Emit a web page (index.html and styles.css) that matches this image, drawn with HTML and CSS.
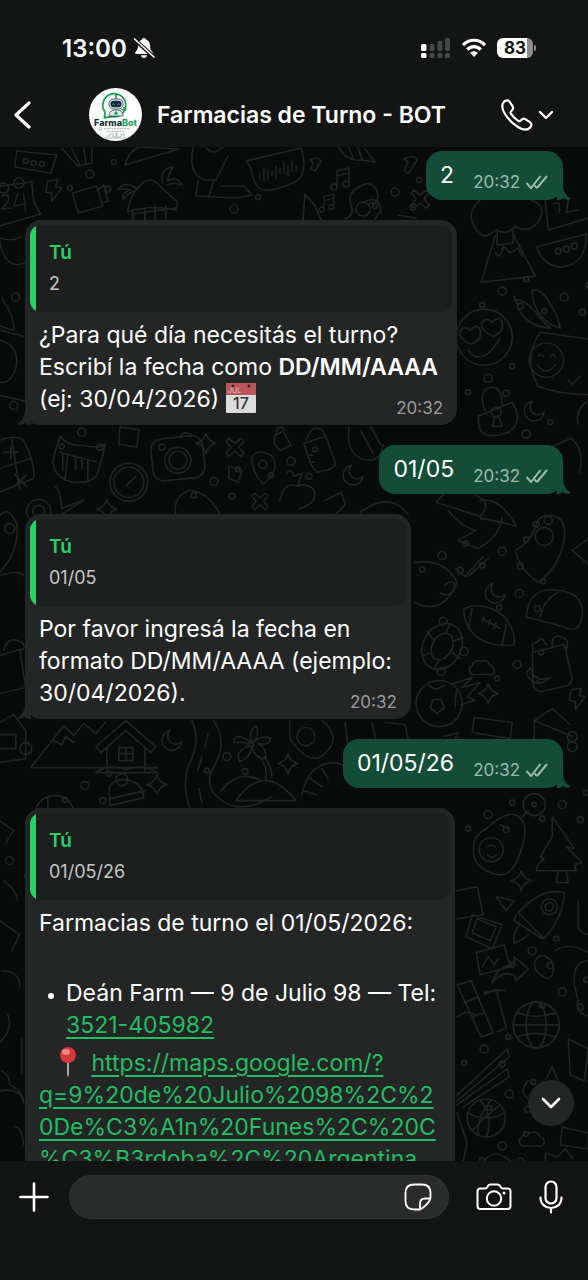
FILE: index.html
```html
<!DOCTYPE html>
<html lang="es">
<head>
  <meta charset="UTF-8">
  <meta name="viewport" content="width=device-width, initial-scale=1.0">
  <title>Farmacias de Turno - BOT</title>
  <link rel="stylesheet" href="styles.css">
</head>
<body>
  <div class="app">
    <header class="top">
      <div class="status">
        <div class="status-left">
          <span class="clock">13:00</span>
          <svg width="22" height="22" viewBox="0 0 22 22">
            <path d="M11 1c-1.300 0-2 .8-2.200 1.800C6 3.700 5 6 5 8.500c0 3.500-1 5-2.500 6.500-.8 1-.4 2 .7 2h15.600c1.100 0 1.500-1 .7-2C18 13.500 17 12 17 8.500c0-2.500-1-4.800-3.800-5.700C13 1.800 12.300 1 11 1zM8 18.300h6c-.3 1.700-1.400 2.700-3 2.700s-2.700-1-3-2.700z" fill="#fff"/>
            <path d="M2 3l19 17" stroke="#131414" stroke-width="4"/>
            <path d="M1.500 2l19.500 18" stroke="#fff" stroke-width="1.700" stroke-linecap="round"/>
          </svg>
        </div>
        <div class="status-right">
          <svg width="30" height="22" viewBox="0 0 30 22">
            <g fill="#454646">
              <rect x="8.500" y="7" width="5" height="7" rx="1.500"/><rect x="16.500" y="4" width="5" height="10" rx="1.500"/><rect x="24" y="1" width="5" height="13" rx="1.500"/>
              <rect x="8.500" y="16" width="5" height="5" rx="1.500"/><rect x="16.500" y="16" width="5" height="5" rx="1.500"/><rect x="24" y="16" width="5" height="5" rx="1.500"/>
            </g>
            <g fill="#fff"><rect x="0" y="7" width="5.500" height="7" rx="1.500"/><rect x="0" y="16" width="5.500" height="5" rx="1.500"/></g>
          </svg>
          <svg width="26" height="20" viewBox="0 0 26 20" fill="none" stroke="#fff" stroke-width="3.200">
            <path d="M2 7.200c6-6.600 16-6.600 22 0"/>
            <path d="M6.200 11.600c3.900-4.100 9.700-4.100 13.600 0"/>
            <path d="M13 19l-4-4.200c2.300-2.200 5.700-2.200 8 0z" fill="#fff" stroke="none"/>
          </svg>
          <span class="battery"><b>83</b></span>
        </div>
      </div>
      <div class="titlebar">
        <button class="icon-btn back" aria-label="Atrás">
          <svg width="18" height="30" viewBox="0 0 18 30" fill="none" stroke="#fff" stroke-width="3.200" stroke-linecap="round" stroke-linejoin="round"><path d="M16 3L3 15l13 12"/></svg>
        </button>
        <svg class="avatar" width="53" height="53" viewBox="0 0 53 53">
          <circle cx="26.500" cy="26.500" r="26.500" fill="#fff"/>
          <path d="M16 24a11.500 11.500 0 1 1 7 4.500l-7.500 1.500z" fill="#fff" stroke="#23a055" stroke-width="1.800"/>
          <path d="M27 7v4" stroke="#20394a" stroke-width="1"/><circle cx="27" cy="7.500" r="1.200" fill="#23a055"/>
          <rect x="20" y="11" width="14" height="10" rx="4.500" fill="#e2e9ec" stroke="#20394a" stroke-width=".8"/>
          <rect x="21.500" y="12.800" width="11" height="6.500" rx="3" fill="#122c3d"/>
          <path d="M23.500 16.500q1-1.500 2 0M28.500 16.500q1-1.500 2 0" stroke="#4cc3e8" stroke-width=".9" fill="none"/>
          <path d="M20 28c0-4 2-6 7-6s7 2 7 6z" fill="#dfe8e8" stroke="#20394a" stroke-width=".7"/>
          <path d="M27 23.500v3.500M25.200 25.200h3.600M35 19v5M32.500 21.500h5" stroke="#23a055" stroke-width="1.500"/>
          <text class="logo" x="26.500" y="38"><tspan fill="#14303f">Farma</tspan><tspan fill="#23a055">Bot</tspan></text>
          <circle cx="11.500" cy="41" r="1.500" fill="none" stroke="#6b9b80" stroke-width=".6"/>
          <path d="M15 40.700h26M18 43.300h17" stroke="#a6b8b2" stroke-width="1" stroke-dasharray="2 .5"/>
          <path d="M15 50h23M17 48h4v-2h3v3h3v-4h1v4h4v-3h3v3" stroke="#7fae96" stroke-width=".7" fill="none"/>
        </svg>
        <h1>Farmacias de Turno - BOT</h1>
        <button class="icon-btn call" aria-label="Llamar">
          <svg width="32" height="32" viewBox="0 0 32 32" fill="none" stroke="#fff" stroke-width="2.200" stroke-linejoin="round"><path d="M3 2.800C5 .8 7.400 1 8.800 3l2.700 4.200c1 1.600.8 2.700-.3 3.900l-1.300 1.500c-.6.700-.5 1.400 0 2.100 2 3.100 4.200 5.200 7.300 7.200.7.500 1.500.5 2.100-.1l1.500-1.300c1.200-1 2.400-1.200 3.900-.2l4.200 2.800c2 1.400 2 3.700.2 5.500C26.500 31.500 22 31.200 17 28 11 24.300 7.500 20.700 4 15 .9 10 .3 5.600 3 2.800z"/></svg>
          <svg width="16" height="10" viewBox="0 0 16 10" fill="none" stroke="#fff" stroke-width="2.400" stroke-linecap="round" stroke-linejoin="round"><path d="M2 2l6 6 6-6"/></svg>
        </button>
      </div>
    </header>

    <main class="chat">
      <svg class="wallpaper" viewBox="0 147 588 1013" preserveAspectRatio="xMidYMin slice">
        <defs>
          <g id="star"><path d="M0-10Q2-2 10 0 2 2 0 10-2 2-10 0-2-2 0-10z"/></g>
          <g id="moon"><path d="M-2-10a10 10 0 1 0 12 11A8 8 0 0 1-2-10z"/></g>
          <g id="cross"><path d="M-9-6l3-3 6 5 6-5 3 3-5 6 5 6-3 3-6-5-6 5-3-3 5-6z"/></g>
          <g id="cloud"><path d="M-10 7a5 5 0 0 1 0-9Q-8-9-1-6 5-9 8-2q6 2 3 8-1 2-5 1z"/></g>
          <g id="bolt"><path d="M-6-9L4-10 2-3l6 1L-2 11l0-8-6-1z"/></g>
          <g id="ball"><circle r="19"/><path d="M-18-5Q0 5 18-5M-14 13Q0-3 14-13M-6-18Q8 0 0 19M5-18Q-10 0-8 17"/></g>
          <g id="globe"><circle r="23"/><ellipse rx="10" ry="23"/><path d="M-23 0h46M-19-12q19 7 38 0M-19 12q19-7 38 0"/></g>
          <g id="house"><path d="M-30 2L0-24 30 2l-5 6L0-14-25 8zM-19 4v22M19 4v22M-7 3H7v13H-7zM0 3v13M-7 9H7M-30 28q14-10 30-3 16-7 32 3z"/></g>
          <g id="jam"><path d="M-18-10l32-8 8 34q-1 6-8 8l-23 5q-6 0-8-6zM-17-10l-1-8 10-6 4 6M2-14q-2-14 8-12t6 13M-20 5q4 16 20 10-15 13-24-4z"/></g>
          <g id="note"><path d="M-5 8v-16l12-3v16M-5-3L7-6"/><circle cx="-8" cy="8" r="3"/><circle cx="4" cy="5" r="3"/></g>
          <g id="dots">
            <circle r="4"/><circle cx="24" cy="-12" r="2.500"/><circle cx="18" cy="15" r="3"/><circle cx="-20" cy="14" r="2.500"/>
          </g>
          <g id="smile"><circle r="19"/><path d="M-9-4q3-5 6 0M4-4q3-5 6 0M-10 5q10 14 20 0"/></g>
        </defs>
        <g class="doodles">
          <path d="M17 151l40 4-6 18-36-6zM57 155l-6 18"/>
          <circle cx="26" cy="161" r="2.500"/><circle cx="34" cy="163" r="2.500"/><circle cx="42" cy="164" r="2.500"/>
          <path d="M62 148l16 18 14-3v-15M72 148l8 17M84 148l2 15M125 165q4-14 14-18l40 2z"/>
          <path d="M0 186l32-4 2 20 7 12-41 12M2 196q9-4 6 6l-6 7 10-1M18 194l-4 12 12-2M24 194l2 18"/><circle cx="4" cy="188" r="5"/><circle cx="19" cy="183" r="5"/>
          <use href="#bolt" transform="translate(54 190)"/>
          <path d="M73 193l24-7 6 20-24 7q-5-12-6-20zM98 190l6-5 4 16-6 2"/>
          <path d="M128 210q4-18 10-22 12-16 24 0l16 14-2 8q-25-6-48 2zM133 212v9M145 208v12M155 206v14M166 206v14M132 214l44-6M163 183q-4-14 10-16-5 8-5 14 8-6 14 4-10-3-15 0M136 188q-12-8-18 2 8-2 12 0-8 3-7 9 8-8 13-8"/>
          <path d="M193 148q-5 28 13 32h10l12-24M206 147q6 10 17 0M198 181l-2 15 40 2 16-3-8-9-23 0M214 181l-5 15"/>
          <path d="M246 161l55-13q8 26-6 34-30 14-38 4-4-6-6-18zM260 173v6M264 168v13M268 170v10M272 171v5M276 166v13M280 168v6M284 163v11M288 165v11M292 160v12M296 166v5"/>
          <path d="M310 160q8-4 11 1l-6 10-4-2 2-6zM404 159q10-5 13 1l-9 14-4-4 4-8zM339 148q8 14 22 12l14 2-10-13M349 148l5 12M358 148l4 11"/>
          <use href="#note" transform="translate(342 179)"/><use href="#note" transform="translate(328 203) scale(.8)"/>
          <use href="#cross" transform="translate(420 199)"/>
          <path d="M303 220l2-26 10 12 6 14M345 219q10-4 6-14-4-12 8-18 12-8 18 4 3 12-6 12M363 203q16-10 18 8l-6 8M398 215l18 3"/><circle cx="363" cy="209" r="7"/>
          <path d="M480 200q-15 12-5 28 8 14 20 2 14 6 20-4 14 9 24-6 8-14-8-20M495 236l-14 46 54-6-21-40M497 230v15l16-2v-12M495 252q5 10 8-6l7 7 8-5 4 8"/>
          <path d="M545 200l3 30 40-12M553 204q8-4 6 8M568 200l-2 12 12-2M536 247l50-13q0 30-24 33-18 0-26-20z"/><circle cx="558" cy="251" r="3"/><circle cx="566" cy="249" r="3"/><circle cx="574" cy="246" r="3"/>
          <path d="M514 300q12-2 26 18l10 10q-24-2-32-20-2-8-4-12M532 290q10-2 18 14 7 10 10 24-14-4-22-16-6-10-6-22z"/>
          <circle cx="484" cy="337" r="28"/><path d="M471 344q-14-6-11-13t10-1q8-8 10 1t-9 13zM493 336q-14-6-11-13t10-1q8-8 10 1t-9 13zM468 350q14 18 32-12"/>
          <path d="M540 332l56 8v54q-30 2-58-8-16-28 2-54zM568 380l4 4 8-8"/><use href="#smile" transform="translate(546 360) scale(.9)"/>
          <path d="M478 416l34-14q12 20-4 30-20 8-28-2-2-6-2-14zM485 411q-8-22 6-24 11 0 11 17"/><circle cx="496" cy="412" r="5"/><path d="M495 416l-3 10h10l-4-11"/>
          <use href="#moon" transform="translate(534 411)"/><path d="M588 400q-14 10-10 24M553 446l18-8q14 12 8 34"/>
          <path d="M0 440q16-6 24 0 12 24 10 38l-34 14M12 439l8 50M0 468l32-10M4 452h14M11 446v12M15 474l12 12M27 474l-12 12"/>
          <path d="M53 462q3-16 8-26 6 10 22 9 14 4 22-1-2 14-5 20-2 20-24 18-20-2-23-20zM59 452l38 10M63 454v16M68 455l-3 25M88 460v20M76 458v12M82 460v9"/>
          <path d="M120 427l19 2-2 18-18-3z"/>
          <circle cx="129" cy="482" r="19"/><circle cx="129" cy="482" r="15"/><path d="M127 485l9-9"/>
          <rect x="152" y="437" width="52" height="42" rx="11" transform="rotate(-6 178 458)"/><circle cx="178" cy="460" r="13"/><circle cx="178" cy="460" r="9"/><circle cx="162" cy="447" r="3"/><path d="M180 437q4-8 12-2"/>
          <use href="#star" transform="translate(206 443)"/><use href="#cross" transform="translate(235 447)"/>
          <path d="M252 457q5-8 14-4 10 2 9 15-4 10-12 16-12-14-11-27zM275 435l8-4 8 14-11 5-6-7zM276 434q2-12 9-4"/><circle cx="263" cy="464" r="4"/>
          <path d="M304 443l22-7 9 26q2 7-18 10-6-4-13-29zM306 440q4-12 10-12 8 0 9 8M308 455h5M309 462h5M349 427q-4 30 20 33 12 0 14-16M361 431l12 22M371 427l10 18"/>
          <use href="#moon" transform="translate(353 475)"/>
          <path d="M286 474q4-8 8 2l8-3-4 12q20-2 16 14-6 8-14 9M280 500q4-20 18-14M325 500l16-8 4 12-12 13M229 466l13 4-4 12-9-4zM176 516q-4-20 14-26 20 2 32 28"/>
          <circle cx="39" cy="511" r="12"/><circle cx="39" cy="511" r="6"/><path d="M54 486q6 0 8 22l22-8-22 14"/><use href="#star" transform="translate(107 509)"/>
          <use href="#cross" transform="translate(260 501) scale(.9)"/>
          <path d="M436 502q20-26 42-6 14 8 2 20zM480 500q20-4 36 26-20-6-36-8M448 510q14 18 28 20l-18 10 20 8q20-10 24-30M360 512q30-22 48 2"/>
          <path d="M536 524q4-12 18-8 12 2 10 24-6 28-26 42-18-12-23-32 16-8 21-26z"/><circle cx="544" cy="536" r="9"/><circle cx="536" cy="524" r="3"/><circle cx="548" cy="520" r="4"/>
          <path d="M455 568l10 8 18-20M468 576l20-18M415 562q30-4 42 20-14 34-42 20M444 585q12-8 10 2t-14 6"/>
          <use href="#moon" transform="translate(495 593)"/>
          <path d="M588 538l-16 12 16 14M526 617q2-26 22-28 36 0 34 26-2 14-10 14-20-6-44-12zM540 616q4-18 18-24"/>
          <path d="M464 608q20-8 40 8 12 16 10 28-22 4-38-8-14-14-12-28zM472 608l-4 20M506 624l-4 20M482 618l18 10M484 616l-2 6M490 619l-2 6M496 622l-2 6"/>
          <ellipse cx="442" cy="646" rx="19" ry="24" transform="rotate(30 442 646)"/><ellipse cx="442" cy="646" rx="10" ry="14" transform="rotate(30 442 646)"/>
          <path d="M446 632l4-9M454 640l9-3M452 652l8 6M438 661l-4 8M430 652l-8 4M433 639l-6-8"/><circle cx="443" cy="621" r="4"/><circle cx="464" cy="651" r="4"/><circle cx="441" cy="671" r="4"/>
          <use href="#jam" transform="translate(550 662)"/><use href="#cloud" transform="translate(482 667)"/><use href="#star" transform="translate(488 693)"/><use href="#bolt" transform="translate(577 698)"/>
          <circle cx="439" cy="703" r="23"/><path d="M430 707l3-8 8 0 3 8-7 6zM428 685l8 4 8-4M456 690l-1 16M450 684l22-7-10 10 18-5-13 14 8 4-14 4"/>
          <path d="M474 717l38 5-2 16-38-6zM534 740v-20l38 16M534 720l18-12 18 16M444 736l14-4-4 8"/><circle cx="572" cy="736" r="5"/><circle cx="572" cy="746" r="5"/>
          <path d="M31 767l33-42 10 10 10-12 12 10 10-12M31 767h126M53 740l9 4 4-8 8 6"/><use href="#house" transform="translate(126 744)"/>
          <use href="#moon" transform="translate(172 740)"/>
          <path d="M192 720q10 20-4 46-6 20 2 42M214 720q14 22 0 46-12 20 8 34 20 14 50-4M208 734l-3 12M202 756l-4 14M199 788l3 14"/>
          <path d="M252 742q-18-12-18 0 10-2 16 3-16 6-10 16 10-4 12-14 6 14 14 10 0-10-8-14 14 2 12-6-10-2-16 4 6-10 2-16-8 6-4 17zM260 756q8 12 6 23M264 756q8 10 8 22M221 790q18-22 40-10M236 800q28-40 60 0z"/>
          <use href="#star" transform="translate(157 784)"/><use href="#star" transform="translate(288 763)"/>
          <path d="M110 797q-4-16 12-18 20 0 22 18l-34 8zM110 798l35-8M36 809q4-14 20-14 12 0 18 14M48 796v14"/><circle cx="122" cy="779" r="6"/>
          <path d="M290 720v18q20 30 36 14t-4-32M345 722l7 60M372 722l4 20M385 722l20 2 3 15M302 794q6-30 30-32 12 0 14 8M304 790l12 4M310 778l12 8M322 768l6 10"/><circle cx="306" cy="736" r="9"/>
          <path d="M0 734h16v14H0M0 722l14-8 12 16v28l-26 4M0 575q18-6 24 0M0 655l20-6 6 38-26 6M4 650q4-14 14-10t4 10M0 572q20-22 17-48-8-20-17-8"/><circle cx="26" cy="748" r="6"/><circle cx="10" cy="528" r="5"/>
          <path d="M0 238q14 4 22-2M0 242q6 28 25 21M2 298q14 20 12 32l-14-4M0 340q18 4 17 24-4 20-17 18M24 336l-24-6M0 395l26 6"/>
          <path d="M474 856q-4-20 12-28 26-24 36-8 6 10-2 32-8 24-22 22-20-4-24-18z"/><circle cx="491" cy="849" r="12"/><path d="M487 846q4-3 8 0M487 854q5 5 9 0M500 824l8 4M522 816l6-6"/><circle cx="534" cy="804" r="11"/><circle cx="534" cy="804" r="2"/>
          <path d="M552 816l22 32-8-2 16 16-8 2 2 6-40 0q0-6 8-12l-4-2 12-20zM558 870l-2 12h12l-2-12"/>
          <use href="#star" transform="translate(521 880)"/>
          <path d="M518 912q24-26 46-20 0 22-20 46zM516 914l-2 6 28 18 4-2M520 924q-8 8-6 18 8-2 14-8M496 896l18 4-8 10zM457 890l20-4 6 28-26 4M472 914l30 10-10 24-26-12zM477 918l19 8-6 14-18-8zM476 952l28-8 6 22-30 8zM482 966l6-10 6 8 4-6M492 982q6-18 22-18v-8l14 12-12 12-2-6q-14-4-22 8z"/><circle cx="549" cy="906" r="8"/><circle cx="549" cy="906" r="4"/>
          <path d="M535 960q6-10 16 0 6 14-4 18-16-8-12-18zM555 950q14-10 33 2M578 900v28q6 6 10 6M588 960q-16 0-14 24l4 16q-4 12 10 15"/>
          <path d="M457 984l14-4 22 52-12 4zM464 1002l14-6M472 1016l12-4M484 992l12-3 10 38-9 4M484 994q10-6 20-4M457 1016q10-8 18-2"/>
          <use href="#globe" transform="translate(536 1024)"/><use href="#ball" transform="translate(486 1117)"/>
          <path d="M457 1094l50-46 2 8-52 44M457 1104l50-36 2 8-46 30M568 1038l20 10-4 32-14-6zM528 1098q-10-8 0-18M546 1078l6-12 6 14M562 1126l26 6v16l-28-4z"/><use href="#cloud" transform="translate(532 1138)"/>
          <path d="M484 1160q10-14 26 0M545 1160v-8l12 4 8-8 8 10M457 1112l10 30-4 18M0 1042q14-14 8-28M2 1070q8 4 8 14 14 6 14 18M0 1090q20-4 24 12M14 1126q8-2 10 18M22 1038v34"/>
          <path d="M0 820l14 10-8 12M4 880q12 8 14 20M0 920l20 14-8 16M2 970q18 0 18 16"/>
          <use href="#dots" transform="translate(90 174)"/><use href="#dots" transform="translate(234 209)"/><use href="#dots" transform="translate(395 192)"/>
          <use href="#dots" transform="translate(502 291)"/><use href="#dots" transform="translate(564 297)"/><use href="#dots" transform="translate(488 378)"/><use href="#dots" transform="translate(526 434)"/>
          <use href="#dots" transform="translate(82 432)"/><use href="#dots" transform="translate(214 481)"/><use href="#dots" transform="translate(291 461)"/><use href="#dots" transform="translate(442 555)"/><use href="#dots" transform="translate(502 551)"/>
          <use href="#dots" transform="translate(519 593)"/><use href="#dots" transform="translate(517 664)"/><use href="#dots" transform="translate(85 785)"/><use href="#dots" transform="translate(227 756)"/><use href="#dots" transform="translate(562 804)"/>
          <use href="#dots" transform="translate(488 814)"/><use href="#dots" transform="translate(532 950)"/><use href="#dots" transform="translate(562 991)"/><use href="#dots" transform="translate(484 1048)"/><use href="#dots" transform="translate(509 1093)"/><use href="#dots" transform="translate(502 1145)"/>
          <use href="#dots" transform="translate(16 297)"/><use href="#dots" transform="translate(14 405)"/><use href="#dots" transform="translate(10 860)"/>
        </g>
      </svg>

      <div class="msg out">
        <p>2</p>
        <span class="meta">20:32 <svg class="ticks" viewBox="0 0 24 16"><path d="M1.500 9l4.500 5L15.500 2M12 14L22 2M9.500 11.500l2.500 2.500"/></svg></span>
        <svg class="tail" viewBox="0 0 14 18"><path d="M0 0h6c0 8 2 12 8 16-3 1-5 1-8-1-2 2-3 2-6 2z"/></svg>
      </div>

      <div class="msg in">
        <blockquote><b>Tú</b><span>2</span></blockquote>
        <div class="text">
          <p>¿Para qué día necesitás el turno?<br>Escribí la fecha como <strong>DD/MM/AAAA</strong><br>(ej: 30/04/2026)
            <svg class="calendar" viewBox="0 0 30 30">
              <rect width="30" height="30" rx="1" fill="#dcdcdc"/>
              <path d="M0 0h30v12H0z" fill="#b9565a"/>
              <circle cx="7" cy="3" r="1.500" fill="#3a2020"/><circle cx="23" cy="3" r="1.500" fill="#3a2020"/>
              <text x="2" y="10" class="cal-month">JUL</text>
              <text x="15" y="26" class="cal-day">17</text>
            </svg>
          </p>
          <span class="meta">20:32</span>
        </div>
        <svg class="tail" viewBox="0 0 14 18"><path d="M0 0h6c0 8 2 12 8 16-3 1-5 1-8-1-2 2-3 2-6 2z"/></svg>
      </div>

      <div class="msg out">
        <p>01/05</p>
        <span class="meta">20:32 <svg class="ticks" viewBox="0 0 24 16"><path d="M1.500 9l4.500 5L15.500 2M12 14L22 2M9.500 11.500l2.500 2.500"/></svg></span>
        <svg class="tail" viewBox="0 0 14 18"><path d="M0 0h6c0 8 2 12 8 16-3 1-5 1-8-1-2 2-3 2-6 2z"/></svg>
      </div>

      <div class="msg in">
        <blockquote><b>Tú</b><span>01/05</span></blockquote>
        <div class="text">
          <p>Por favor ingresá la fecha en<br>formato DD/MM/AAAA (ejemplo:<br>30/04/2026).</p>
          <span class="meta">20:32</span>
        </div>
        <svg class="tail" viewBox="0 0 14 18"><path d="M0 0h6c0 8 2 12 8 16-3 1-5 1-8-1-2 2-3 2-6 2z"/></svg>
      </div>

      <div class="msg out">
        <p>01/05/26</p>
        <span class="meta">20:32 <svg class="ticks" viewBox="0 0 24 16"><path d="M1.500 9l4.500 5L15.500 2M12 14L22 2M9.500 11.500l2.500 2.500"/></svg></span>
        <svg class="tail" viewBox="0 0 14 18"><path d="M0 0h6c0 8 2 12 8 16-3 1-5 1-8-1-2 2-3 2-6 2z"/></svg>
      </div>

      <div class="msg in">
        <blockquote><b>Tú</b><span>01/05/26</span></blockquote>
        <div class="text">
          <p>Farmacias de turno el 01/05/2026:</p>
          <ul>
            <li>Deán Farm — 9 de Julio 98 — Tel:<br><a href="tel:3521405982">3521-405982</a></li>
          </ul>
          <p class="place">
            <svg class="pin" viewBox="0 0 18 30">
              <path d="M8 14h2v14l-1 2-1-2z" fill="#a9a9ac"/>
              <circle cx="9" cy="8" r="8" fill="#d8373a"/>
              <ellipse cx="7" cy="5" rx="4" ry="3" fill="#f08a84"/>
            </svg>
            <a href="https://maps.google.com/?q=9%20de%20Julio%2098%2C%20De%C3%A1n%20Funes%2C%20C%C3%B3rdoba%2C%20Argentina">https://maps.google.com/?<br>q=9%20de%20Julio%2098%2C%2<br>0De%C3%A1n%20Funes%2C%20C<br>%C3%B3rdoba%2C%20Argentina</a>
          </p>
        </div>
      </div>

      <button class="scroll-down" aria-label="Ir al final">
        <svg width="20" height="12" viewBox="0 0 20 12" fill="none" stroke="#fff" stroke-width="2.600" stroke-linecap="round" stroke-linejoin="round"><path d="M2 2l8 8 8-8"/></svg>
      </button>
    </main>

    <footer class="composer">
      <button class="icon-btn" aria-label="Adjuntar">
        <svg width="30" height="30" viewBox="0 0 30 30" stroke="#fff" stroke-width="2.600" stroke-linecap="round"><path d="M15 1.500v27M1.500 15h27"/></svg>
      </button>
      <div class="field">
        <input type="text" aria-label="Mensaje">
        <button class="icon-btn" aria-label="Stickers">
          <svg width="28" height="28" viewBox="0 0 28 28" fill="none" stroke="#fff" stroke-width="1.800" stroke-linecap="round" stroke-linejoin="round"><path d="M15 26.500h-5c-6 0-8.500-3-8.500-8.500v-8c0-6 3-8.500 8.500-8.500h8c6 0 8.500 3 8.500 8.500v4c0 3-1 4.500-3.500 7S18 26.500 15 26.500zM26.400 15.500H21c-4 0-5 2-5 5.500v5.500"/></svg>
        </button>
      </div>
      <button class="icon-btn" aria-label="Cámara">
        <svg width="36" height="28" viewBox="0 0 36 28" fill="none" stroke="#fff" stroke-width="2" stroke-linejoin="round"><path d="M4.500 5.500h4.700c1 0 1.500-.4 2-1.200l1-1.700c.5-.8 1-1.100 2-1.100h7.600c1 0 1.500.3 2 1.100l1 1.700c.5.800 1 1.200 2 1.200h4.700c2 0 3 1 3 3v14.500c0 2-1 3-3 3h-27c-2 0-3-1-3-3V8.500c0-2 1-3 3-3z"/><circle cx="18" cy="15.500" r="7.200"/><circle cx="28" cy="10" r="1.500" fill="#fff" stroke="none"/></svg>
      </button>
      <button class="icon-btn" aria-label="Grabar audio">
        <svg width="24" height="34" viewBox="0 0 24 34" fill="none" stroke="#fff" stroke-width="2.200" stroke-linecap="round"><rect x="6.500" y="1.500" width="11" height="22" rx="5.500"/><path d="M1.500 17.500c0 14 21 14 21 0M12 28v4.500"/></svg>
      </button>
    </footer>
  </div>
</body>
</html>
```

FILE: styles.css
```css
* {
  box-sizing: border-box;
}
body {
  margin: 0;
  background: #121313;
  color: #fff;
  font-family: Inter, "Liberation Sans", sans-serif;
}
p, h1, ul, blockquote {
  margin: 0;
  padding: 0;
}
svg {
  display: block;
  flex: none;
}
.app {
  display: flex;
  flex-direction: column;
  height: 100vh;
}

/* header */
.top {
  flex: none;
  background: #131414;
}
.status {
  display: flex;
  justify-content: space-between;
  align-items: center;
  padding: 32px 55px 0 62px;
  height: 64px;
}
.status-left, .status-right {
  display: flex;
  align-items: center;
}
.status-left {
  gap: 6px;
}
.status-right {
  gap: 10px;
}
.clock {
  font-size: 24px;
  font-weight: 600;
}
.battery {
  position: relative;
  width: 36px;
  height: 20px;
  border-radius: 6px;
  background: linear-gradient(90deg, #fff 83%, #8c8c8c 83%);
  color: #131414;
  font-size: 17px;
  line-height: 20px;
  text-align: center;
}
.battery::after {
  content: "";
  position: absolute;
  right: -3px;
  top: 7px;
  width: 2px;
  height: 6px;
  border-radius: 0 2px 2px 0;
  background: #8c8c8c;
}
.titlebar {
  display: flex;
  align-items: center;
  height: 83px;
  padding: 18px 34px 0 13px;
}
.icon-btn {
  display: flex;
  align-items: center;
  padding: 0;
  border: none;
  background: none;
  cursor: pointer;
}
.back {
  width: 76px;
}
h1 {
  flex: 1;
  margin-left: 15px;
  font-size: 23px;
  font-weight: 600;
  white-space: nowrap;
}
.call {
  gap: 5px;
}
.logo {
  font-size: 9px;
  font-weight: 800;
  text-anchor: middle;
}

/* messages */
.chat {
  position: relative;
  flex: 1;
  min-height: 0;
  overflow: hidden;
  display: flex;
  flex-direction: column;
  align-items: flex-start;
  gap: 20px;
  padding: 4px 25px 0;
  background: #090a0a;
}
.wallpaper {
  position: absolute;
  left: 0;
  top: 0;
  width: 100%;
  height: 100%;
}
.doodles {
  fill: none;
  stroke: #232525;
  stroke-width: 1.6px;
  stroke-linejoin: round;
  stroke-linecap: round;
}
.msg {
  position: relative;
  flex: none;
  border-radius: 16px;
  font-size: 23px;
  line-height: 32px;
}
.out {
  display: flex;
  align-self: flex-end;
  gap: 19px;
  height: 49px;
  padding: 8px 14px;
  background: #144d37;
}
.in {
  padding: 5px;
  background: #242626;
}
.tail {
  position: absolute;
  bottom: -1px;
  width: 14px;
  height: 18px;
}
.out .tail {
  right: -8px;
  fill: #144d37;
}
.in .tail {
  left: -8px;
  fill: #242626;
  transform: scaleX(-1);
}
.meta {
  display: flex;
  align-items: center;
  gap: 5px;
  align-self: flex-end;
  color: #9a9c9c;
  font-size: 17px;
  line-height: 20px;
}
.out .meta {
  color: #9dbaae;
}
.ticks {
  width: 24px;
  height: 16px;
  fill: none;
  stroke: #9dbaae;
  stroke-width: 2px;
}
blockquote {
  display: flex;
  flex-direction: column;
  height: 87px;
  padding: 13px 19px;
  border-radius: 11px;
  background: linear-gradient(90deg, #25d366 6px, #1d1f1f 6px);
}
blockquote b {
  color: #25d366;
  font-size: 19px;
  font-weight: 600;
  line-height: 30px;
}
blockquote span {
  color: #c4c6c6;
  font-size: 18px;
  line-height: 32px;
}
.text {
  position: relative;
  padding: 7px 14px 5px 9px;
}
.in .meta {
  position: absolute;
  right: 9px;
  bottom: 2px;
}
strong {
  font-weight: 600;
}
.calendar {
  display: inline-block;
  width: 30px;
  height: 30px;
  vertical-align: -6px;
}
.cal-month {
  fill: #eac0c0;
  font-size: 7px;
}
.cal-day {
  fill: #333;
  font-size: 16px;
  font-weight: 500;
  text-anchor: middle;
}
ul {
  margin: 38px 0 6px;
  padding-left: 27px;
}
li::marker {
  font-size: 18px;
}
a {
  color: #23bd63;
  text-decoration-thickness: 2px;
  text-underline-offset: 4px;
}
.pin {
  display: inline-block;
  width: 18px;
  height: 30px;
  margin: 0 8px 0 20px;
  vertical-align: -6px;
}
.scroll-down {
  position: absolute;
  right: 14px;
  bottom: 35px;
  display: flex;
  align-items: center;
  justify-content: center;
  width: 46px;
  height: 46px;
  border: none;
  border-radius: 50%;
  background: #242626;
  cursor: pointer;
}

/* message box */
.composer {
  flex: none;
  display: flex;
  align-items: center;
  height: 119px;
  padding: 0 25px 48px 19px;
  background: #121313;
}
.field {
  flex: 1;
  min-width: 0;
  display: flex;
  align-items: center;
  height: 44px;
  margin: 0 27px 0 20px;
  padding: 0 16px;
  border: 1px solid #323434;
  border-radius: 22px;
  background: #2a2b2b;
}
.field input {
  flex: 1;
  min-width: 0;
  border: none;
  outline: none;
  background: none;
  color: #fff;
  font: inherit;
  font-size: 23px;
}
.composer > .icon-btn:last-child {
  margin-left: 27px;
}
```
